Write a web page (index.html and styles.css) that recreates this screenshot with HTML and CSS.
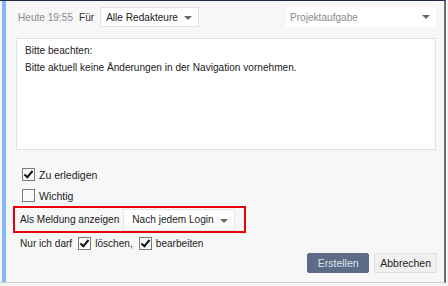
FILE: index.html
```html
<!DOCTYPE html>
<html lang="de">
<head>
    <meta charset="UTF-8">
    <title>Aufgabe erstellen</title>
    <link rel="stylesheet" href="styles.css">
</head>
<body>
    <div class="window">
        <div class="panel">
            <div class="toolbar">
                <span class="date">Heute 19:55</span>
                <span class="for">Für</span>
                <div class="select select-editors">
                    <span>Alle Redakteure</span>
                    <i class="arrow"></i>
                </div>
                <div class="select select-type">
                    <span>Projektaufgabe</span>
                    <i class="arrow"></i>
                </div>
            </div>

            <div class="note">
                <p>Bitte beachten:</p>
                <p>Bitte aktuell keine Änderungen in der Navigation vornehmen.</p>
            </div>

            <div class="options">
                <label class="check-row">
                    <span class="box checked"></span>
                    <span>Zu erledigen</span>
                </label>
                <label class="check-row">
                    <span class="box"></span>
                    <span>Wichtig</span>
                </label>
                <div class="highlight">
                    <span>Als Meldung anzeigen</span>
                    <div class="select select-login">
                        <span>Nach jedem Login</span>
                        <i class="arrow"></i>
                    </div>
                </div>
                <div class="rights">
                    <span>Nur ich darf</span>
                    <span class="box checked"></span>
                    <span>löschen,</span>
                    <span class="box checked"></span>
                    <span>bearbeiten</span>
                </div>
            </div>

            <div class="actions">
                <button class="btn btn-primary">Erstellen</button>
                <button class="btn">Abbrechen</button>
            </div>
        </div>
    </div>
</body>
</html>
```

FILE: styles.css
```css
body {
    margin: 0;
    background-color: #f3f3f3;
    font-family: "Liberation Sans", Arial, sans-serif;
    font-size: 10.1px;
    color: #222;
}

.window {
    width: 446px;
    height: 283px;
    box-sizing: border-box;
    border-top: 1px solid #1e2b45;
    border-right: 2px solid #6a6a6a;
    border-bottom: 1px solid #cfcfcf;
    background-color: #f7f7f7;
    padding-left: 2px;
    display: flex;
}

.panel {
    flex: 1;
    border-left: 4px solid #8ab6f6;
    padding: 6px 7px 0 10px;
}

.toolbar {
    display: flex;
    align-items: center;
    height: 20px;
    padding-left: 2px;
    padding-right: 1px;
    white-space: nowrap;
}

.date {
    color: #8a8a8a;
}

.for {
    margin-left: 6px;
    color: #333;
}

.select {
    position: relative;
    display: flex;
    align-items: center;
    height: 20px;
    box-sizing: border-box;
    background: #fff;
    padding-left: 5px;
    white-space: nowrap;
    flex-shrink: 0;
}

.select-editors {
    width: 99px;
    margin-left: 6px;
    border: 1px solid #e2e2e2;
}

.select-type {
    width: 150px;
    margin-left: auto;
    color: #8a8a8a;
    padding-left: 4px;
}

.arrow {
    position: absolute;
    right: 6px;
    top: 8px;
    width: 0;
    height: 0;
    border-left: 4px solid transparent;
    border-right: 4px solid transparent;
    border-top: 4px solid #666;
}

.note {
    margin-top: 11px;
    margin-right: 1px;
    height: 112px;
    box-sizing: border-box;
    background: #fff;
    border: 1px solid #e0e0e0;
    padding: 3px 8px;
}

.note p {
    margin: 0;
    line-height: 17px;
}

.options {
    margin-top: 18px;
    padding-left: 6px;
    display: flex;
    flex-direction: column;
    gap: 8px;
}

.check-row {
    display: flex;
    align-items: center;
    height: 13px;
    gap: 4px;
    font-size: 10.5px;
}

.box {
    display: inline-block;
    position: relative;
    width: 13px;
    height: 13px;
    box-sizing: border-box;
    border: 1px solid #7a7a7a;
    background: #fbfbfb;
    flex-shrink: 0;
}

.box.checked::after {
    content: "";
    position: absolute;
    left: 3px;
    top: 0px;
    width: 3px;
    height: 7px;
    border-right: 2px solid #111;
    border-bottom: 2px solid #111;
    transform: rotate(40deg);
}

.highlight {
    display: flex;
    align-items: center;
    margin-left: -9px;
    margin-top: -4px;
    width: 233px;
    height: 27px;
    box-sizing: border-box;
    border: 2px solid #e8000c;
    padding-left: 5px;
    white-space: nowrap;
}

.select-login {
    width: 112px;
    height: 22px;
    margin-left: 4px;
    padding-left: 8px;
    border: 1px solid #e6e6e6;
}

.select-login .arrow {
    top: 9px;
    right: 6px;
}

.rights {
    display: flex;
    align-items: center;
    gap: 4px;
    margin-left: -2px;
    margin-top: -4px;
    height: 13px;
    white-space: nowrap;
}

.rights .box {
    margin-left: 2px;
}

.actions {
    display: flex;
    justify-content: flex-end;
    gap: 5px;
    margin-top: 3px;
}

.btn {
    height: 20px;
    padding: 0 5px;
    font-family: inherit;
    font-size: 10.5px;
    color: #222;
    background: #f0f0f0;
    border: 1px solid #e0e0e0;
    border-radius: 2px;
}

.btn-primary {
    width: 62px;
    color: #dde3ee;
    background: #5c6b86;
    border-color: #5c6b86;
}
```
